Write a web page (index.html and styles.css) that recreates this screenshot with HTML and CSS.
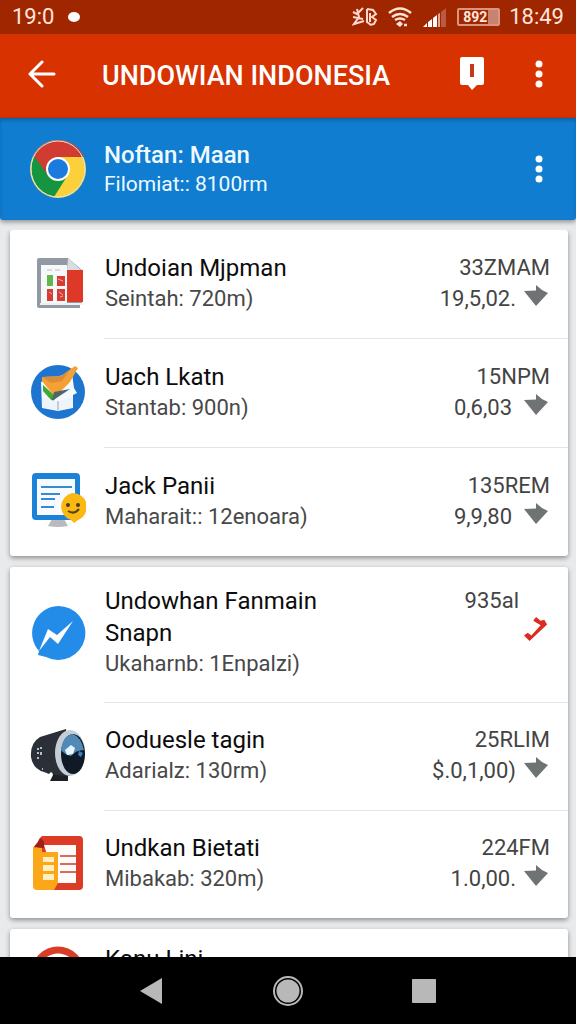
FILE: index.html
```html
<!DOCTYPE html>
<html lang="id">
<head>
<meta charset="utf-8">
<meta name="viewport" content="width=device-width, initial-scale=1">
<title>Undowian Indonesia</title>
<link rel="stylesheet" href="styles.css">
</head>
<body>
<svg class="defs" aria-hidden="true">
  <symbol id="drop" viewBox="0 0 24 24"><path d="M0 7L12 6.500V1l6 5 6 3-12 13z" fill="#707374"/></symbol>
  <symbol id="dots" viewBox="0 0 8 28"><g fill="#fff"><circle cx="4" cy="4" r="3.5"/><circle cx="4" cy="14" r="3.5"/><circle cx="4" cy="24" r="3.5"/></g></symbol>
</svg>

<div class="status">
  <span>19:0</span>
  <svg class="status-dot" width="12" height="12" viewBox="0 0 12 12"><ellipse cx="6" cy="6" rx="6" ry="5" fill="#fff"/></svg>
  <div class="status-icons">
    <svg width="26" height="22" viewBox="0 0 26 22" fill="none" stroke="#ffd9cd" stroke-width="2"><path d="M1 6l4 2 6-6M5 3l2 8-5 7 10-3M1 11l10 2M15 3v13l4 3M15 3l6 1 3 4-4 3 4 3-2 4-4 1M18 7v9"/></svg>
    <svg width="26" height="22" viewBox="0 0 26 22" fill="none" stroke="#ffe2d8" stroke-width="2.500"><path d="M2 7q11-9 22 0M5 11q8-6 16 0M8 14q5-3 10 0"/><path d="M9 18l4-3 3 3-3 3z" fill="#ffe2d8" stroke="none"/><path d="M17 19h3"/></svg>
    <svg width="26" height="22" viewBox="0 0 26 22"><path d="M1 21l4-4v4zM6 21v-5l4-3v8zM11 21v-9l4-3v12z" fill="#fff"/><path d="M16 21V8l2-1v14z" fill="#e9a691"/><path d="M19 21V6l5-4v19z" fill="#b95a43"/></svg>
    <span class="battery">892</span>
    <span>18:49</span>
  </div>
</div>

<header class="bar">
  <button class="icon-btn" aria-label="Kembali"><svg width="28" height="28" viewBox="0 0 28 28" fill="none" stroke="#fff" stroke-width="3" stroke-linecap="round" stroke-linejoin="round"><path d="M14 2L2 14l12 12M2 14h24"/></svg></button>
  <h1>UNDOWIAN INDONESIA</h1>
  <button class="icon-btn" aria-label="Pesan"><svg width="26" height="34" viewBox="0 0 26 34"><path d="M3 0h20q2 0 2 2v24q0 2-2 2h-5l-5 5-4-5H3q-2 0-2-2V2q0-2 2-2z" fill="#fff"/><path d="M11 7h4v13h-4z" fill="#c53a16"/></svg></button>
  <button class="icon-btn" aria-label="Menu"><svg width="8" height="28"><use href="#dots"/></svg></button>
</header>

<section class="featured">
  <svg class="app-icon" viewBox="0 0 56 58">
    <ellipse cx="28" cy="29" rx="28" ry="29" fill="#fcd03b"/>
    <path d="M3 17A28 29 0 0 1 54 17H28L17 37z" fill="#d03c31"/>
    <path d="M4 16A28 29 0 0 0 24 57L36 38 17 34z" fill="#159540"/>
    <ellipse cx="28" cy="29" rx="27" ry="28" fill="none" stroke="#d5e9df" stroke-width="1"/>
    <circle cx="28" cy="29" r="11" fill="#1b7bdc" stroke="#fff" stroke-width="2"/>
  </svg>
  <div class="featured-text"><h2>Noftan: Maan</h2><p>Filomiat:: 8100rm</p></div>
  <button class="icon-btn" aria-label="Opsi"><svg width="8" height="28"><use href="#dots"/></svg></button>
</section>

<main>
  <ul class="card">
    <li>
      <svg class="app-icon" viewBox="0 0 56 56"><path d="M9 3h29l14 12v34H50v4H9q-2 0-2-2V5q0-2 2-2z" fill="#9399a3"/><path d="M11 10h26v38H11z" fill="#f7f8fa"/><path d="M38 3l14 13-15-1z" fill="#d9dce0"/><path d="M37 15h16v32H37z" fill="#dd3828"/><path d="M10 48h43v2H10z" fill="#eef0f2"/><path d="M17 20h6v11h-6z" fill="#60b849"/><path d="M27 21h8v10h-8zM17 34h6v12h-6zM27 34h8v12h-8z" fill="#d83a34"/><path d="M28 24l5 2M29 37l4 3M30 42l3-1M19 37l3 2" stroke="#f5aaa3"/><path d="M17 15h5m3 0h5" stroke="#bbc"/></svg>
      <div class="row">
        <div class="label"><h3>Undoian Mjpman</h3><p>Seintah: 720m)</p></div>
        <div class="value"><span>33ZMAM</span><span class="trend">19,5,02.<svg><use href="#drop"/></svg></span></div>
      </div>
    </li>
    <li>
      <svg class="app-icon" viewBox="0 0 56 56"><circle cx="28" cy="28" r="27" fill="#1d75cf"/><path d="M11 18l14-5 17-4 2 15 3 5-4 2v13l-15 3-16-3z" fill="#f4f9fd"/><path d="M12 13l19-1 14-10 3 2-8 14-15 15-13-16z" fill="#f5a034"/><path d="M12 13l19-1 8-5-7 10-11 2z" fill="#d98c3b"/><path d="M13 21l12 11-4 4-8-9z" fill="#43a832"/><path d="M24 28l16-3-15 10-9 9 7-11z" fill="#4b6769"/><path d="M12 33l16 5 15-6v11l-15 3-16-3z" fill="#edf4fa"/><path d="M28 37v9" stroke="#8ba9be"/></svg>
      <div class="row">
        <div class="label"><h3>Uach Lkatn</h3><p>Stantab: 900n)</p></div>
        <div class="value"><span>15NPM</span><span class="trend wide">0,6,03<svg><use href="#drop"/></svg></span></div>
      </div>
    </li>
    <li>
      <svg class="app-icon" viewBox="0 0 56 56"><path d="M22 47h12l4 7q-10 2-20 0z" fill="#b8babd"/><rect x="2" y="1" width="48" height="47" rx="4" fill="#1b82d6"/><path d="M7 7h38v36H7z" fill="#f7fafe"/><path d="M11 15h31M11 22h19M11 27h14M11 35h13" stroke="#388bd0" stroke-width="2"/><path d="M42 21a14 14 0 0 1 6 27l-4 3-3-3a14 14 0 0 1 1-27z" fill="#fbb811"/><circle cx="38" cy="33" r="2" fill="#463c20"/><circle cx="48" cy="33" r="2" fill="#463c20"/><path d="M38 39q6 4 11-2" fill="none" stroke="#594414" stroke-width="2"/></svg>
      <div class="row">
        <div class="label"><h3>Jack Panii</h3><p>Maharait:: 12enoara)</p></div>
        <div class="value"><span>135REM</span><span class="trend wide">9,9,80<svg><use href="#drop"/></svg></span></div>
      </div>
    </li>
  </ul>

  <ul class="card compact">
    <li class="tall">
      <svg class="app-icon" viewBox="0 0 56 56"><path d="M28 1a27 27 0 1 1-12 51l-8-2 1-4A27 27 0 0 1 28 1z" fill="#238ce9"/><path d="M9 46l9-22 9 6 16-14-15 23-8-7z" fill="#fff"/></svg>
      <div class="row">
        <div class="label"><h3>Undowhan Fanmain Snapn</h3><p>Ukaharnb: 1Enpalzi)</p></div>
        <div class="value"><span class="inset">935al</span><span class="trend"><svg viewBox="0 0 26 26"><path d="M10 4l3-4 5 4 4-1 3 5L6 26l-6-6 4-3 4 3L18 9z" fill="#dc2b20"/></svg></span></div>
      </div>
    </li>
    <li>
      <svg class="app-icon" viewBox="0 0 56 56"><path d="M22 44h16v10H20l3-6z" fill="#1c1f25"/><path d="M36 2L10 10Q0 16 1 30q2 12 13 15l5 2 2-2 4 3 15 1z" fill="#2b3038"/><ellipse cx="40" cy="26" rx="15" ry="23" fill="#c5ced6"/><ellipse cx="43" cy="27" rx="12" ry="20" fill="#101a27"/><path d="M31 23Q33 8 43 7q8 3 11 16-8 0-13 6-6-1-10-6z" fill="#518bb5"/><path d="M35 23l6-5 4 3-2 6-6 1z" fill="#e4f5ff"/><path d="M49 24l4 2-2 4-3-2z" fill="#3a7fc0"/><path d="M8 21v2m0 2v2m0 3v2m3-12v2m0 3v3m1 14h1" stroke="#b5bdc5" stroke-width="2"/></svg>
      <div class="row">
        <div class="label"><h3>Ooduesle tagin</h3><p>Adarialz: 130rm)</p></div>
        <div class="value"><span>25RLIM</span><span class="trend">$.0,1,00)<svg><use href="#drop"/></svg></span></div>
      </div>
    </li>
    <li>
      <svg class="app-icon" viewBox="0 0 56 56"><path d="M12 1h37q4 0 4 4v46q0 4-4 4H20L5 15l4-11z" fill="#dc3c25"/><path d="M14 10h32v38H26z" fill="#fffafa"/><path d="M3 13h11V7L11 3z" fill="#9f2018"/><path d="M3 12l9 1v4h16v31l-4 7H7q-4 0-4-4z" fill="#fba719"/><path d="M13 22h11v5H13zm0 8h11v6H13zm0 9h11v6H13z" fill="#fff0bf"/><path d="M30 21h16M30 29h16M30 37h16" stroke="#d46d5c" stroke-width="2"/></svg>
      <div class="row">
        <div class="label"><h3>Undkan Bietati</h3><p>Mibakab: 320m)</p></div>
        <div class="value"><span>224FM</span><span class="trend">1.0,00.<svg><use href="#drop"/></svg></span></div>
      </div>
    </li>
  </ul>

  <ul class="card">
    <li class="last">
      <svg class="app-icon" viewBox="0 0 56 56"><circle cx="28" cy="28" r="23" fill="#fff" stroke="#d93d26" stroke-width="7"/></svg>
      <div class="row">
        <div class="label"><h3>Kanu Lini</h3></div>
      </div>
    </li>
  </ul>
</main>

<nav class="sysnav">
  <button aria-label="Kembali"><svg width="32" height="32" viewBox="0 0 32 32"><path d="M4 16L26 3v26z" fill="#b8b8b8"/></svg></button>
  <button aria-label="Beranda"><svg width="32" height="32" viewBox="0 0 32 32"><circle cx="16" cy="16" r="14" fill="none" stroke="#b8b8b8" stroke-width="2"/><circle cx="16" cy="16" r="11.5" fill="#b8b8b8"/></svg></button>
  <button aria-label="Terbaru"><svg width="32" height="32" viewBox="0 0 32 32"><rect x="4" y="4" width="24" height="24" rx="1" fill="#b8b8b8"/></svg></button>
</nav>
</body>
</html>
```

FILE: styles.css
```css
* { box-sizing: border-box; }
body {
  margin: 0;
  height: 100vh;
  display: flex;
  flex-direction: column;
  background: #e9eaec;
  font-family: Roboto, "Liberation Sans", sans-serif;
  color: #0c0c0c;
}
h1, h2, h3, p, ul { margin: 0; padding: 0; font-weight: 400; }
ul { list-style: none; }
svg { display: block; flex: none; }
button { border: 0; padding: 0; background: none; display: grid; place-items: center; }
.defs { position: absolute; width: 0; height: 0; }

.status {
  flex: none;
  display: flex;
  align-items: center;
  height: 34px;
  padding: 0 12px;
  background: #a02600;
  color: #ffe6dd;
  font-size: 22px;
  line-height: 32px;
}
.status-dot { margin-left: 14px; }
.status-icons { margin-left: auto; display: flex; align-items: center; gap: 9px; }
.battery {
  width: 43px;
  height: 18px;
  border: 2px solid #dc9380;
  border-radius: 2px;
  background: linear-gradient(90deg, transparent 75%, #c68372 75%);
  padding-left: 4px;
  font-size: 14px;
  font-weight: 700;
  line-height: 14px;
}

.bar {
  flex: none;
  display: flex;
  align-items: center;
  height: 84px;
  padding: 0 12px 4px;
  background: #d73200;
  color: #fff;
}
.icon-btn { width: 60px; height: 48px; flex: none; }
.bar .icon-btn + .icon-btn, .featured .icon-btn { width: 50px; }
.bar h1 { flex: 1; padding: 4px 0 0 30px; font-size: 27px; font-weight: 500; line-height: 32px; white-space: nowrap; }
.bar .icon-btn + .icon-btn { margin-left: 12px; }

.featured {
  flex: none;
  display: flex;
  align-items: center;
  height: 102px;
  padding: 0 12px 0 30px;
  margin-bottom: 10px;
  border-radius: 0 0 3px 3px;
  background: #107dd1;
  box-shadow: 0 2px 5px #0006, inset 0 3px 4px -1px #0004;
  color: #eefaff;
}
.featured .app-icon { height: 60px; }
.featured-text { flex: 1; padding-left: 18px; }
.featured h2 { font-size: 24px; font-weight: 500; line-height: 30px; }
.featured p { font-size: 21px; line-height: 28px; }

main { flex: 1; min-height: 0; overflow: hidden; padding: 0 8px 0 10px; }
.card { background: #fff; border-radius: 3px; box-shadow: 0 2px 5px #0006; margin-bottom: 11px; }
.card li { display: flex; align-items: center; padding-left: 20px; }
.app-icon { width: 56px; height: 56px; }
.card .app-icon { margin: 0 18px 4px 0; }
.row {
  flex: 1;
  display: flex;
  justify-content: space-between;
  gap: 12px;
  padding: 22px 18px 24px 1px;
  border-bottom: 1px solid #e4e4e4;
}
.card li:last-child .row { border-bottom: 0; }
.compact .row { padding: 21px 18px 24px 1px; }
.compact .tall .row { padding-top: 18px; padding-bottom: 23px; }
.card .last { align-items: flex-start; }
.card .last .app-icon { margin-top: 16px; }
.card .last .row { padding: 14px 18px 0 1px; }
.label { max-width: 230px; }
.label h3 { font-size: 24px; line-height: 32px; }
.label p { font-size: 22px; line-height: 30px; color: #484848; white-space: nowrap; }
.value { display: flex; flex-direction: column; align-items: flex-end; font-size: 22px; line-height: 32px; color: #444; }
.inset { padding-right: 31px; }
.trend { display: flex; gap: 8px; line-height: 30px; padding-right: 2px; }
.wide { gap: 12px; }
.trend svg { width: 24px; height: 24px; }

.sysnav {
  flex: none;
  display: flex;
  justify-content: center;
  align-items: center;
  gap: 104px;
  height: 67px;
  background: #000;
}
```
